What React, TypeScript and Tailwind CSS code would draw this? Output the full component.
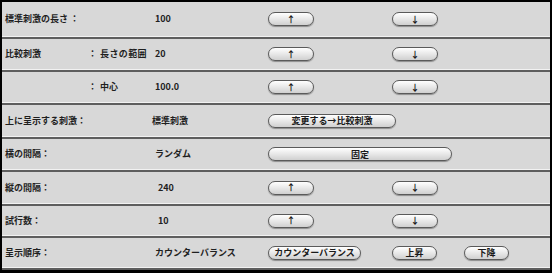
import React from "react";

const font = { fontFamily: '"Noto Sans CJK JP", "Noto Sans", sans-serif' };

function Btn({ w, children }: { w: string; children: React.ReactNode }) {
  return (
    <div
      className={`${w} h-[14px] rounded-full border border-[#5a5a5a] bg-gradient-to-b from-[#ffffff] via-[#e8e8e8] to-[#d0d0d0] shadow-[0_1px_1px_rgba(0,0,0,0.35)] flex items-center justify-center text-[9px] font-bold text-[#1a1a1a] leading-none`}
    >
      {children}
    </div>
  );
}

function Row({
  h,
  label,
  mid,
  value,
  valueX,
  children,
}: {
  h: string;
  label?: string;
  mid?: React.ReactNode;
  value: string;
  valueX?: string;
  children: React.ReactNode;
}) {
  return (
    <div className={`${h} flex flex-col`}>
      <div className="flex-1 flex items-center text-[9px] font-bold text-[#1f1f1f]">
        <div className="w-[86px] pl-[3px] whitespace-nowrap">{label}</div>
        <div className="w-[64px] flex whitespace-nowrap">{mid}</div>
        <div className={`w-[116px] ${valueX ?? "pl-[3px]"} whitespace-nowrap`}>{value}</div>
        <div className="flex-1 flex items-center">{children}</div>
      </div>
      <div className="h-px bg-[#f2f2f2]" />
      <div className="h-[2px] bg-[#5e5e5e]" />
    </div>
  );
}

function UpDown() {
  return (
    <div className="flex items-center">
      <Btn w="w-[46px]">↑</Btn>
      <div className="w-[78px]" />
      <Btn w="w-[46px]">↓</Btn>
    </div>
  );
}

export default function App() {
  return (
    <div style={font} className="w-[552px] h-[273px] bg-[#d8d8d8] border-t-2 border-l-2 border-r-2 border-b-[3px] border-black flex flex-col overflow-hidden">
      <Row h="h-[37px]" label="標準刺激の長さ ：" value="100">
        <UpDown />
      </Row>
      <Row
        h="h-[33px]"
        label="比較刺激"
        mid={
          <>
            <span className="w-[12px]">：</span>
            <span className="tracking-[0.4px]">長さの範囲</span>
          </>
        }
        value="20"
      >
        <UpDown />
      </Row>
      <Row
        h="h-[33px]"
        label=""
        mid={
          <>
            <span className="w-[12px]">：</span>
            <span>中心</span>
          </>
        }
        value="100.0"
      >
        <UpDown />
      </Row>
      <Row h="h-[34px]" label="上に呈示する刺激：" value="標準刺激" valueX="pl-[0px]">
        <Btn w="w-[128px]">変更する→比較刺激</Btn>
      </Row>
      <Row h="h-[33px]" label="横の間隔：" value="ランダム">
        <Btn w="w-[184px]">固定</Btn>
      </Row>
      <Row h="h-[34px]" label="縦の間隔：" value="240" valueX="pl-[6px]">
        <UpDown />
      </Row>
      <Row h="h-[32px]" label="試行数：" value="10" valueX="pl-[6px]">
        <UpDown />
      </Row>
      <Row h="h-[32px]" label="呈示順序：" value="カウンターバランス">
        <div className="flex items-center">
          <Btn w="w-[93px]">カウンターバランス</Btn>
          <div className="w-[31px]" />
          <Btn w="w-[45px]">上昇</Btn>
          <div className="w-[27px]" />
          <Btn w="w-[45px]">下降</Btn>
        </div>
      </Row>
    </div>
  );
}
